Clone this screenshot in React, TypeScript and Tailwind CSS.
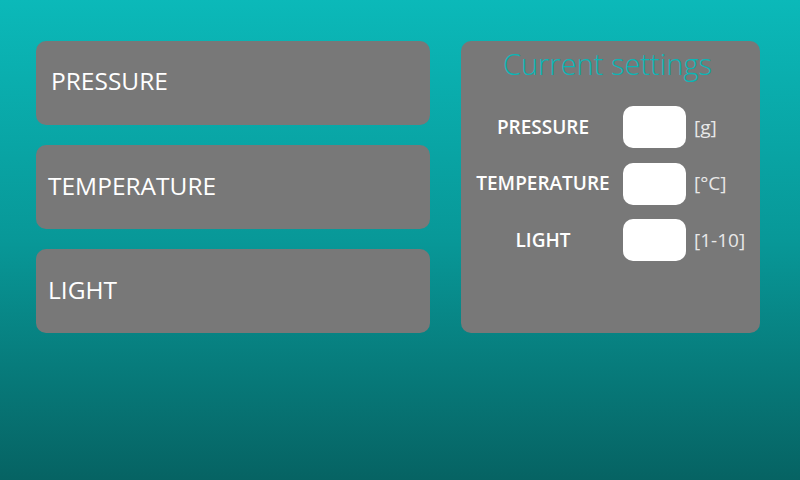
const sensors = ["PRESSURE", "TEMPERATURE", "LIGHT"];

const settings = [
  { label: "PRESSURE", unit: "[g]" },
  { label: "TEMPERATURE", unit: "[°C]" },
  { label: "LIGHT", unit: "[1-10]" },
];

export default function App() {
  return (
    <div
      className="w-[800px] h-[480px] bg-gradient-to-b from-[#0bb9b9] via-[#089898] to-[#066363] flex items-start gap-[31px] pt-[41px] pl-[36px]"
      style={{ fontFamily: '"Open Sans", "Noto Sans", sans-serif' }}
    >
      {/* Sensor buttons */}
      <div className="w-[394px] flex flex-col gap-[20px]">
        {sensors.map((name, i) => (
          <div
            key={name}
            className={`h-[84px] rounded-[10px] bg-[#787878] flex items-center text-white text-[24.5px] ${
              i === 0 ? "pl-[15px] pb-[4px]" : "pl-[12px] pb-[1px]"
            }`}
          >
            {name}
          </div>
        ))}
      </div>

      {/* Current settings */}
      <div className="w-[299px] h-[292px] rounded-[10px] bg-[#787878] flex flex-col pt-[5px]">
        <div className="text-center text-[#0bb6b6] text-[29px] font-light leading-[36px] pr-[6px]">
          Current settings
        </div>
        <div className="grid grid-cols-[156px_63px_auto] gap-x-[4px] gap-y-[14.5px] pl-[2px] items-center mt-[24px]">
          {settings.map((s) => (
            <div key={s.label} className="contents">
              <div className="text-center text-white font-semibold text-[19px] pl-[4px]">
                {s.label}
              </div>
              <div className="h-[42px] rounded-[10px] bg-white" />
              <div className="pl-[4px] text-[#e8e8e8] text-[19px]">{s.unit}</div>
            </div>
          ))}
        </div>
      </div>
    </div>
  );
}
